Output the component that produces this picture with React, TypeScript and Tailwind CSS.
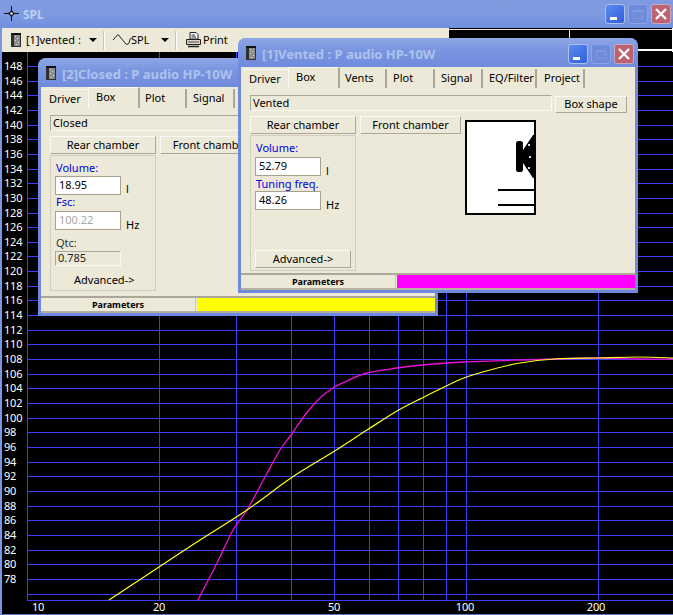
import React from "react";

const yFor = (v: number) => 579 + (78 - v) * 7.33;
const hLabels = Array.from({ length: 36 }, (_, i) => 148 - i * 2);
const hLines = [...hLabels, 76];
const xFor = (hz: number) => 27 + 439 * Math.log10(hz / 10);
const vLines = [20, 30, 40, 50, 60, 70, 80, 90, 100, 200];
const xLabels: [string, number][] = [["10", 38], ["20", 159], ["50", 334], ["100", 465], ["200", 596]];

const yellowPts: [number, number][] = [[109,600],[159,567],[200,540],[247,510],[291,478],[333,452],[367,430],[397,411],[422,398],[444,387],[464,378],[490,370],[520,363],[555,359],[596,358],[640,357],[673,358]];
const magentaPts: [number, number][] = [[198,600],[217,563],[233,530],[247,510],[265,477],[280,450],[291,435],[305,415],[320,398],[333,388],[347,381],[367,373],[397,368],[422,365],[464,362],[520,360],[596,358],[640,359],[673,359]];

function smooth(p: [number, number][]) {
  let d = `M${p[0][0]} ${p[0][1]}`;
  for (let i = 0; i < p.length - 1; i++) {
    const a = p[Math.max(0, i - 1)], b = p[i], c = p[i + 1], e = p[Math.min(p.length - 1, i + 2)];
    d += ` C${b[0] + (c[0] - a[0]) / 6} ${b[1] + (c[1] - a[1]) / 6} ${c[0] - (e[0] - b[0]) / 6} ${c[1] - (e[1] - b[1]) / 6} ${c[0]} ${c[1]}`;
  }
  return d;
}

function DocIcon({ className }: { className: string }) {
  return (
    <svg className={className} viewBox="0 0 10 14" width="10" height="14">
      <rect x="0" y="0" width="10" height="14" fill="#2f2f2f" />
      <rect x="3" y="2" width="6" height="11" fill="#8c8c8c" />
      <rect x="4" y="3" width="1" height="1" fill="#e0e0e0" />
      <rect x="6" y="5" width="1" height="1" fill="#e0e0e0" />
      <rect x="4" y="7" width="1" height="1" fill="#e0e0e0" />
      <rect x="7" y="9" width="1" height="1" fill="#e0e0e0" />
      <rect x="5" y="11" width="1" height="1" fill="#e0e0e0" />
      <rect x="0" y="0" width="10" height="2" fill="#111" />
    </svg>
  );
}

function WinButtons({ pos, w }: { pos: string; w: string }) {
  return (
    <div className={`absolute flex h-[20px] ${pos} ${w} justify-between`}>
      <div className="relative h-[20px] w-[20px] rounded-[3px] border border-[#a9c0f0] bg-[linear-gradient(135deg,#5f8af0,#2f5fdc)]">
        <div className="absolute bottom-[3px] left-[4px] h-[3px] w-[7px] bg-white" />
      </div>
      <div className="relative h-[20px] w-[20px] rounded-[3px] border border-[#8ba3e6] bg-[#6f8cdc]">
        <div className="absolute left-[4px] top-[5px] h-[9px] w-[10px] border border-[#8298dc] border-t-2" />
      </div>
      <div className="relative h-[20px] w-[20px] rounded-[3px] border border-[#c9a8c0] bg-[#bd6270]">
        <svg className="absolute left-[3px] top-[3px]" width="12" height="12" viewBox="0 0 12 12">
          <path d="M1 1 L11 11 M11 1 L1 11" stroke="#fff" strokeWidth="2.4" />
        </svg>
      </div>
    </div>
  );
}

function Raised({ className, children }: { className: string; children: React.ReactNode }) {
  return (
    <div className={`absolute flex items-center justify-center border border-t-[#fbfaf5] border-l-[#fbfaf5] border-r-[#aca899] border-b-[#aca899] ${className}`}>
      {children}
    </div>
  );
}

function Sunken({ className, children }: { className: string; children: React.ReactNode }) {
  return (
    <div className={`absolute flex items-center border border-t-[#aca899] border-l-[#aca899] border-r-[#faf9f3] border-b-[#faf9f3] pl-[2px] ${className}`}>
      {children}
    </div>
  );
}

function Input({ className, children, muted }: { className: string; children: React.ReactNode; muted?: boolean }) {
  return (
    <div className={`absolute flex items-center border border-[#a6a28f] bg-white pl-[3px] ${muted ? "text-[#a8a8a8]" : "text-black"} ${className}`}>
      {children}
    </div>
  );
}

function Label({ className, children }: { className: string; children: React.ReactNode }) {
  return <div className={`absolute whitespace-nowrap leading-[14px] ${className}`}>{children}</div>;
}

function Tab({ left, width, selected, plain, children }: { left: string; width: string; selected?: boolean; plain?: boolean; children: React.ReactNode }) {
  const kind = selected
    ? "top-[29px] h-[21px] border-t border-l border-r-2 border-t-[#fbfaf5] border-l-[#fbfaf5] border-r-[#aca899] pt-[2px]"
    : plain
      ? "top-[31px] h-[19px] border-t border-t-[#f8f6ec] pt-[2px]"
      : "top-[31px] h-[19px] border-r-2 border-[#aca899] pt-[2px]";
  return (
    <div className={`absolute ${left} ${width} ${kind} whitespace-nowrap pl-[7px] leading-[14px]`}>
      {children}
    </div>
  );
}

function ChildWindow({
  pos,
  title,
  children,
  barColor,
}: {
  pos: string;
  title: string;
  children: React.ReactNode;
  barColor: string;
}) {
  return (
    <div className={`absolute w-[400px] rounded-t-[8px] bg-[#7088de] text-[11px] text-black ${pos}`}>
      <div className="absolute left-0 top-0 h-[29px] w-full rounded-t-[8px] bg-[linear-gradient(180deg,#8da6e6_0%,#7b96e0_40%,#6f8bdc_100%)]" />
      <DocIcon className="absolute left-[8px] top-[8px]" />
      <div className="absolute left-[24px] top-[8px] whitespace-nowrap text-[13px] font-bold leading-[16px] text-[#aec3ec]">{title}</div>
      <div className="absolute bottom-[3px] left-[3px] right-[3px] top-[29px] bg-[#ece9d8]" />
      {children}
      <div className={`absolute bottom-[5px] left-[159px] right-[3px] h-[13px] ${barColor}`} />
      <div className="absolute bottom-[18px] left-[3px] right-[3px] h-[2px] bg-[#aca899]" />
      <div className="absolute bottom-[3px] left-[3px] right-[3px] h-[2px] bg-[#b5b19f]" />
      <div className="absolute bottom-[5px] left-[3px] flex h-[13px] w-[155px] items-center justify-center border-r border-[#c9c6b6] [font-family:'Liberation_Serif',serif] text-[9px] font-bold leading-[13px]">
        Parameters
      </div>
    </div>
  );
}

export default function App() {
  return (
    <div className="relative h-[615px] w-[673px] overflow-hidden bg-black [font-family:'Liberation_Sans',sans-serif]">
      {/* main title */}
      <div className="absolute left-0 top-0 h-[28px] w-full bg-[linear-gradient(180deg,#7f9ade_0%,#7e9ae2_50%,#6f8edd_100%)]" />
      <svg className="absolute left-[4px] top-[6px]" width="15" height="15" viewBox="0 0 15 15">
        <path d="M7.5 0 V15 M0 7.5 H15" stroke="#111" strokeWidth="1" />
        <path d="M7.5 3 L9 6 L12 7.5 L9 9 L7.5 12 L6 9 L3 7.5 L6 6 Z" fill="#111" />
        <circle cx="7.5" cy="7.5" r="1.3" fill="#dfe6f7" />
      </svg>
      <div className="absolute left-[23px] top-[7px] text-[12px] font-bold leading-[16px] text-[#bccff0]">SPL</div>
      <WinButtons pos="left-[605px] top-[4px]" w="w-[66px]" />

      {/* toolbar */}
      <div className="absolute left-0 top-[28px] h-[24px] w-[449px] bg-[#ece9d8] text-[11px] leading-[14px] text-black">
        <DocIcon className="absolute left-[11px] top-[5px]" />
        <div className="absolute left-[26px] top-[5px] whitespace-nowrap">[1]vented :</div>
        <div className="absolute left-[89px] top-[10px] h-0 w-0 border-x-[4px] border-t-[4px] border-x-transparent border-t-black" />
        <div className="absolute left-[103px] top-[3px] h-[19px] w-[2px] border-x border-l-[#c9c6b4] border-r-white" />
        <svg className="absolute left-[112px] top-[4px]" width="20" height="14" viewBox="0 0 20 14">
          <path d="M1 8 L6 2.5 L11.5 9 L13 11 A2.2 2.2 0 0 0 17 11 L18.5 6" fill="none" stroke="#222" strokeWidth="1" />
        </svg>
        <div className="absolute left-[131px] top-[5px] whitespace-nowrap">SPL</div>
        <div className="absolute left-[161px] top-[10px] h-0 w-0 border-x-[4px] border-t-[4px] border-x-transparent border-t-black" />
        <div className="absolute left-[175px] top-[3px] h-[19px] w-[2px] border-x border-l-[#c9c6b4] border-r-white" />
        <svg className="absolute left-[185px] top-[3px]" width="17" height="17" viewBox="0 0 17 17">
          <path d="M5 1.5 H11 L13 3.5 V8 H5 Z" fill="#fff" stroke="#222" />
          <path d="M6.5 4 H10 M6.5 6 H11" stroke="#222" />
          <path d="M1.5 8.5 H15.5 V13.5 H1.5 Z" fill="#d8d5c4" stroke="#222" />
          <path d="M3 15.5 H14" stroke="#222" strokeWidth="1.5" />
          <path d="M3 11 H14" stroke="#555" />
        </svg>
        <div className="absolute left-[203px] top-[5px] whitespace-nowrap">Print</div>
      </div>
      <div className="absolute left-[449px] top-[29px] h-[1px] w-[224px] bg-[#e8e5d5]" />
      <div className="absolute left-[569px] top-[30px] h-[8px] w-[1px] bg-[#ece9d8]" />
      <div className="absolute left-[638px] top-[49px] h-[2px] w-[35px] bg-white" />
      <div className="absolute left-[672px] top-[28px] h-[24px] w-[1px] bg-white" />

      {/* chart */}
      <svg className="absolute left-0 top-0" width="673" height="615" viewBox="0 0 673 615">
        {hLines.map((v) => (
          <line key={v} x1="27" x2="673" y1={Math.round(yFor(v)) + 0.5} y2={Math.round(yFor(v)) + 0.5} stroke="#3c3cff" strokeWidth="1" />
        ))}
        {vLines.map((hz) => (
          <line key={hz} x1={Math.round(xFor(hz)) + 0.5} x2={Math.round(xFor(hz)) + 0.5} y1="52" y2="600" stroke="#3c3cff" strokeWidth="1" />
        ))}
        <line x1="27.5" x2="27.5" y1="52" y2="601" stroke="#3c3cff" />
        <line x1="27" x2="673" y1="600.5" y2="600.5" stroke="#3c3cff" />
        <path d={smooth(magentaPts)} fill="none" stroke="#ee10d8" strokeWidth="1.3" />
        <path d={smooth(yellowPts)} fill="none" stroke="#ffff20" strokeWidth="1.2" />
      </svg>
      {hLabels.map((v) => (
        <div
          key={v}
          className="absolute left-[4px] text-[11px] leading-[12px] tracking-[-0.2px] text-white"
          style={{ top: Math.round(yFor(v)) - 6 }}
        >
          {v}
        </div>
      ))}
      {xLabels.map(([t, x]) => (
        <div
          key={t}
          className="absolute top-[601px] -translate-x-1/2 text-[11px] leading-[12px] tracking-[-0.2px] text-white"
          style={{ left: x }}
        >
          {t}
        </div>
      ))}
      <div className="absolute left-0 top-[28px] h-[587px] w-[2px] bg-[#7a96e2]" />
      <div className="absolute bottom-0 left-0 h-[1px] w-full bg-[#5a70c8]" />

      {/* Closed window */}
      <ChildWindow pos="left-[38px] top-[58px] h-[258px]" title="[2]Closed : P audio HP-10W" barColor="bg-[#ffff00]">
        <Tab left="left-[3px]" width="w-[47px]" plain><span className="pl-[1px]">Driver</span></Tab>
        <Tab left="left-[50px]" width="w-[52px]" selected>Box</Tab>
        <Tab left="left-[100px]" width="w-[49px]">Plot</Tab>
        <Tab left="left-[148px]" width="w-[49px]">Signal</Tab>
        <Sunken className="left-[12px] top-[57px] h-[16px] w-[290px]">Closed</Sunken>
        <Raised className="left-[12px] top-[78px] h-[18px] w-[106px]">Rear chamber</Raised>
        <Raised className="left-[122px] top-[78px] h-[18px] w-[102px]">Front chamber</Raised>
        <div className="absolute left-[12px] top-[97px] h-[136px] w-[106px] border border-[#d2cfbe]" />
        <Label className="left-[18px] top-[103px] text-[#0000e0]">Volume:</Label>
        <Input className="left-[17px] top-[118px] h-[19px] w-[66px]">18.95</Input>
        <Label className="left-[88px] top-[124px]">l</Label>
        <Label className="left-[18px] top-[137px] text-[#0000e0]">Fsc:</Label>
        <Input className="left-[17px] top-[153px] h-[19px] w-[66px]" muted>100.22</Input>
        <Label className="left-[88px] top-[160px]">Hz</Label>
        <Label className="left-[18px] top-[178px] text-[#333]">Qtc:</Label>
        <Sunken className="left-[17px] top-[193px] h-[15px] w-[66px] text-[#222]">0.785</Sunken>
        <Label className="left-[36px] top-[215px]">Advanced-&gt;</Label>
      </ChildWindow>

      {/* Vented window */}
      <ChildWindow pos="left-[238px] top-[38px] h-[255px]" title="[1]Vented : P audio HP-10W" barColor="bg-[#ff00ff]">
        <WinButtons pos="left-[330px] top-[6px]" w="w-[66px]" />
        <Tab left="left-[3px]" width="w-[47px]" plain><span className="pl-[1px]">Driver</span></Tab>
        <Tab left="left-[50px]" width="w-[52px]" selected>Box</Tab>
        <Tab left="left-[100px]" width="w-[49px]">Vents</Tab>
        <Tab left="left-[148px]" width="w-[49px]">Plot</Tab>
        <Tab left="left-[196px]" width="w-[49px]">Signal</Tab>
        <Tab left="left-[244px]" width="w-[55px]">EQ/Filter</Tab>
        <Tab left="left-[299px]" width="w-[48px]">Project</Tab>
        <Sunken className="left-[12px] top-[57px] h-[16px] w-[302px]">Vented</Sunken>
        <Raised className="left-[317px] top-[58px] h-[17px] w-[72px]">Box shape</Raised>
        <Raised className="left-[12px] top-[78px] h-[18px] w-[106px]">Rear chamber</Raised>
        <Raised className="left-[122px] top-[78px] h-[18px] w-[101px]">Front chamber</Raised>
        <div className="absolute left-[12px] top-[97px] h-[136px] w-[106px] border border-[#d2cfbe]" />
        <Label className="left-[18px] top-[103px] text-[#0000e0]">Volume:</Label>
        <Input className="left-[17px] top-[119px] h-[19px] w-[66px]">52.79</Input>
        <Label className="left-[88px] top-[126px]">l</Label>
        <Label className="left-[18px] top-[139px] text-[#0000e0]">Tuning freq.</Label>
        <Input className="left-[17px] top-[153px] h-[19px] w-[66px]">48.26</Input>
        <Label className="left-[88px] top-[160px]">Hz</Label>
        <Raised className="left-[17px] top-[212px] h-[18px] w-[96px]">Advanced-&gt;</Raised>
        <svg className="absolute left-[227px] top-[82px]" width="71" height="95" viewBox="0 0 71 95">
          <rect x="1" y="1" width="69" height="93" fill="#fff" stroke="#000" strokeWidth="2" />
          <rect x="51" y="21" width="7" height="31" rx="2.5" fill="#000" />
          <path d="M56 33 L68 15 H71 V58 H68 L56 40 Z" fill="#000" />
          <rect x="63" y="24" width="2" height="2" fill="#ddd" />
          <rect x="64" y="36" width="2" height="2" fill="#ddd" />
          <rect x="63" y="47" width="2" height="2" fill="#ddd" />
          <rect x="33" y="69" width="37" height="2" fill="#000" />
          <rect x="33" y="84" width="37" height="2" fill="#000" />
        </svg>
      </ChildWindow>
    </div>
  );
}
